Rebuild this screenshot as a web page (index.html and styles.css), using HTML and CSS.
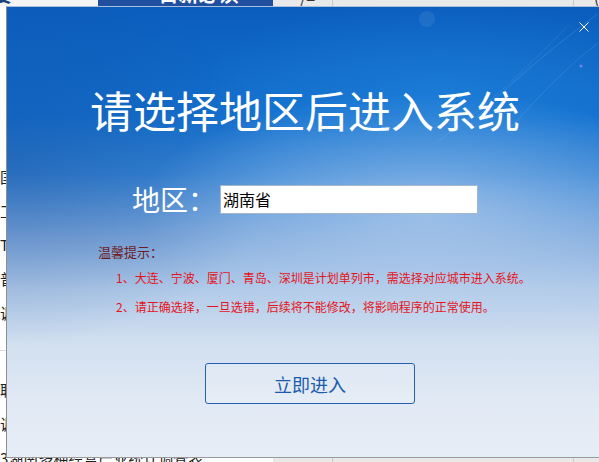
FILE: index.html
```html
<!DOCTYPE html>
<html lang="zh-CN">
<head>
<meta charset="utf-8">
<title>选择地区</title>
<link rel="stylesheet" href="styles.css">
</head>
<body>
<div class="screen">
  <div class="app">
    <div class="leftpane">
      <div class="tabs">
        <div class="tab tab-plain"><span class="tabtext dark">摘要</span></div>
        <div class="tab tab-active"><span class="tabtext">日新必读</span></div>
      </div>
      <div class="list">
        <div class="row">国民经济</div>
        <div class="row">工业统计</div>
        <div class="row">TI能源</div>
        <div class="row">普查数据</div>
        <div class="row">调查统计</div>
        <div class="sep"></div>
        <div class="row">职业调查</div>
        <div class="row">调查汇总</div>
        <div class="row">3湖南多种经营产业统计调查表</div>
      </div>
    </div>
    <div class="rightpane">
      <div class="col col-a"><span class="coltext">/=</span></div>
      <div class="col col-b"></div>
      <div class="col col-c"><span class="coltext">(</span></div>
    </div>
  </div>

  <div class="dialog">
    <svg class="deco" width="591" height="140" viewBox="0 0 591 140">
      <circle cx="420" cy="12" r="8" fill="rgba(255,255,255,0.07)"/>
      <path d="M470 110 C 520 60, 560 30, 600 0" stroke="rgba(255,255,255,0.12)" fill="none" stroke-width="1"/>
      <path d="M500 125 C 540 80, 570 50, 600 30" stroke="rgba(255,255,255,0.10)" fill="none" stroke-width="1"/>
      <path d="M430 135 C 480 100, 520 60, 560 20" stroke="rgba(255,255,255,0.08)" fill="none" stroke-width="1"/>
      <circle cx="574" cy="59" r="1.5" fill="rgba(170,150,255,0.6)"/>
    </svg>
    <svg class="close" width="10" height="10" viewBox="0 0 10 10">
      <path d="M0.5 0.5 L9.5 9.5 M9.5 0.5 L0.5 9.5" stroke="#ffffff" stroke-width="1" fill="none"/>
    </svg>
    <h1 class="title">请选择地区后进入系统</h1>
    <div class="region">
      <span class="region-label">地区：</span>
      <div class="region-input">湖南省</div>
    </div>
    <div class="tips">
      <div class="tips-head">温馨提示：</div>
      <div class="tip tip-1">1、大连、宁波、厦门、青岛、深圳是计划单列市，需选择对应城市进入系统。</div>
      <div class="tip tip-2">2、请正确选择，一旦选错，后续将不能修改，将影响程序的正常使用。</div>
    </div>
    <button class="enter">立即进入</button>
  </div>
</div>
</body>
</html>
```

FILE: styles.css
```css
* { box-sizing: border-box; }
html, body { margin: 0; padding: 0; }
body {
  width: 599px;
  height: 462px;
  overflow: hidden;
  background: #ffffff;
  font-family: "Noto Sans CJK SC", "Noto Sans", sans-serif;
}
.screen {
  position: relative;
  width: 599px;
  height: 462px;
  overflow: hidden;
}

/* background application */
.app {
  display: flex;
  height: 100%;
  overflow: hidden;
}
.leftpane {
  width: 273px;
  flex-shrink: 0;
  background: #ffffff;
  display: flex;
  flex-direction: column;
  overflow: hidden;
}
.tabs {
  display: flex;
  flex-shrink: 0;
  height: 6px;
  overflow: hidden;
}
.tab {
  height: 6px;
  overflow: hidden;
}
.tab-plain {
  width: 98px;
  background: #f4f4f4;
}
.tab-active {
  width: 175px;
  background: #1f4f9e;
  text-align: center;
  padding-left: 26px;
}
.tabtext {
  display: block;
  margin-top: -17px;
  font-size: 20px;
  line-height: 22px;
  font-weight: 700;
  color: #ffffff;
  white-space: nowrap;
}
.tabtext.dark {
  color: #1d3f7a;
  margin-left: -28px;
}
.list {
  padding-top: 154px;
  display: flex;
  flex-direction: column;
  flex-shrink: 0;
}
.row {
  height: 34px;
  flex-shrink: 0;
  line-height: 34px;
  font-size: 15px;
  color: #222222;
  white-space: nowrap;
}
.sep {
  height: 21px;
  flex-shrink: 0;
  border-bottom: 1px solid #dddddd;
  margin-bottom: 22px;
}
.rightpane {
  flex: 1;
  display: flex;
  background: #e9e9e9;
}
.col {
  border-right: 1px solid #c9c9c9;
  overflow: hidden;
}
.col-a { width: 60px; }
.col-b { width: 241px; }
.col-c { flex: 1; border-right: 0; }
.coltext {
  display: block;
  margin-top: -12px;
  padding-left: 27px;
  font-size: 16px;
  line-height: 18px;
  color: #333333;
}
.col-c .coltext { padding-left: 20px; }

/* dialog */
.dialog {
  position: absolute;
  left: 6px;
  top: 6px;
  width: 600px;
  height: 452px;
  border-left: 1px solid #8e8e8e;
  border-top: 1px solid #a9bfdc;
  border-bottom: 1px solid #9a9a9a;
  overflow: hidden;
  display: flex;
  flex-direction: column;
  align-items: flex-start;
  background:
    radial-gradient(ellipse 48% 26% at 70% 45%, rgba(200, 220, 245, 0.55), rgba(200, 220, 245, 0) 100%),
    radial-gradient(ellipse 40% 20% at 72% 18%, rgba(40, 150, 235, 0.35), rgba(40, 150, 235, 0) 100%),
    radial-gradient(ellipse 45% 40% at 0% 35%, rgba(15, 60, 140, 0.32), rgba(15, 60, 140, 0) 100%),
    linear-gradient(180deg, #0b5dbd 0%, #1470ce 24%, #3584d4 37%, #7ea9dc 51%, #b2cbe9 63%, #d2e0f0 75%, #e1e9f4 88%, #e6edf6 100%);
}
.deco {
  position: absolute;
  left: 0;
  top: 0;
  pointer-events: none;
}
.close {
  position: absolute;
  left: 572px;
  top: 15px;
}
.title {
  margin: 74px 0 0 83px;
  font-size: 43px;
  line-height: 56px;
  font-weight: 400;
  color: #ffffff;
  white-space: nowrap;
  position: relative;
}
.region {
  margin: 48px 0 0 125px;
  display: flex;
  align-items: center;
  gap: 4px;
}
.region-label {
  font-size: 28px;
  line-height: 29px;
  color: #ffffff;
  width: 84px;
  white-space: nowrap;
}
.region-input {
  width: 258px;
  height: 29px;
  background: #ffffff;
  border: 1px solid #a8b6c9;
  font-size: 16px;
  line-height: 27px;
  padding-left: 2px;
  color: #000000;
}
.tips {
  margin: 28px 0 0 91px;
  display: flex;
  flex-direction: column;
}
.tips-head {
  font-size: 13px;
  line-height: 20px;
  color: #6e1a1e;
}
.tip {
  font-size: 12px;
  line-height: 20px;
  color: #e5141b;
  padding-left: 18px;
  white-space: nowrap;
}
.tip-1 { margin-top: 6px; }
.tip-2 { margin-top: 9px; }
.enter {
  margin: 46px 0 0 198px;
  width: 210px;
  height: 41px;
  border: 1.5px solid #2262b0;
  border-radius: 3px;
  background: rgba(255, 255, 255, 0.18);
  font-family: "Noto Sans CJK SC", "Noto Sans", sans-serif;
  font-size: 18px;
  color: #1b5bac;
  padding: 0;
  cursor: pointer;
}
```
